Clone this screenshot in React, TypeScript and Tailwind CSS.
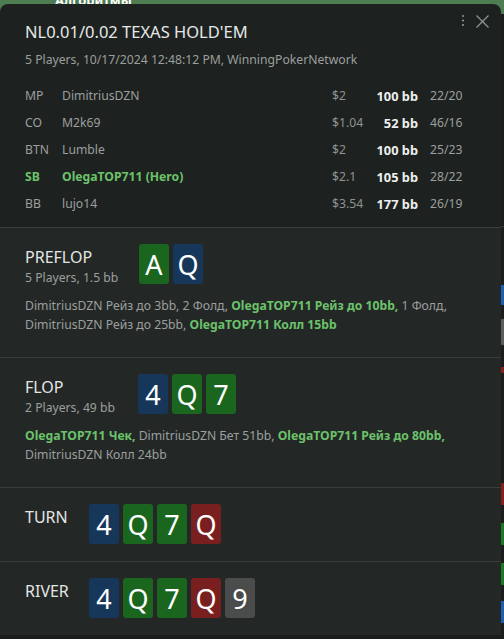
import React from 'react';

type Suit = 'c' | 'd' | 'h' | 's';

const suitBg: Record<Suit, string> = {
  c: 'bg-[#1b661f]',
  d: 'bg-[#16375a]',
  h: 'bg-[#7a1f1f]',
  s: 'bg-[#4a4b4b]',
};

const players = [
  { pos: 'MP', name: 'DimitriusDZN', stack: '$2', bb: '100 bb', stats: '22/20' },
  { pos: 'CO', name: 'M2k69', stack: '$1.04', bb: '52 bb', stats: '46/16' },
  { pos: 'BTN', name: 'Lumble', stack: '$2', bb: '100 bb', stats: '25/23' },
  { pos: 'SB', name: 'OlegaTOP711 (Hero)', stack: '$2.1', bb: '105 bb', stats: '28/22', hero: true },
  { pos: 'BB', name: 'lujo14', stack: '$3.54', bb: '177 bb', stats: '26/19' },
];

const Card = ({ rank, suit }: { rank: string; suit: Suit }) => (
  <div
    className={`w-[30px] h-[40px] rounded-[3px] flex items-center justify-center text-[27px] leading-none text-white ${suitBg[suit]}`}
  >
    {rank}
  </div>
);

const Hero = ({ children }: { children: React.ReactNode }) => (
  <span className="font-bold text-[#6cc26b]">{children}</span>
);

const Street = ({
  label,
  sub,
  cards,
  labelWidth,
  children,
}: {
  label: string;
  sub?: string;
  cards: [string, Suit][];
  labelWidth: string;
  children?: React.ReactNode;
}) => (
  <section className="border-t border-[#393e3b] bg-[#232826] pl-[25px] pr-[20px] pt-[16px] pb-[17px]">
    <div className="flex items-start">
      <div className={`${labelWidth} shrink-0 pt-[1px]`}>
        <div className="text-[16px] leading-[24px] text-[#e4e6e5]">{label}</div>
        {sub && <div className="text-[12.2px] leading-[17px] text-[#9c9f9e]">{sub}</div>}
      </div>
      <div className="flex gap-[4px]">
        {cards.map(([r, s], i) => (
          <Card key={i} rank={r} suit={s} />
        ))}
      </div>
    </div>
    {children && (
      <p className="mt-[10px] mb-[6px] text-[12.2px] leading-[19px] text-[#9c9f9e]">{children}</p>
    )}
  </section>
);

const App = () => {
  return (
    <div
      className="relative w-[504px] h-[639px] overflow-hidden bg-[#1a1d1c]"
      style={{ fontFamily: '"Segoe UI", "Noto Sans", "Open Sans", sans-serif' }}
    >
      {/* app behind the popup */}
      <div className="absolute top-0 left-0 right-0 h-[14px] bg-[#4e7d51] overflow-hidden">
        <div className="pl-[55px] -mt-[9px] text-[13px] font-bold text-white">Алгоритмы</div>
      </div>
      <div className="absolute right-0 top-0 w-[3px] h-full flex flex-col">
        <div className="h-[226px]" />
        <div className="h-[1px] bg-[#3a3f3c]" />
        <div className="h-[58px]" />
        <div className="h-[20px] bg-[#1d5fb0]" />
        <div className="h-[14px]" />
        <div className="h-[26px] bg-[#5a5c5b]" />
        <div className="h-[22px]" />
        <div className="h-[6px] bg-[#8a1c1c]" />
        <div className="h-[110px]" />
        <div className="h-[22px] bg-[#8a1c1c]" />
        <div className="h-[18px]" />
        <div className="h-[22px] bg-[#1b7a22]" />
        <div className="h-[18px]" />
        <div className="h-[22px] bg-[#1b7a22]" />
        <div className="h-[16px]" />
        <div className="h-[22px] bg-[#1d5fb0]" />
      </div>

      <div className="relative mt-[4px] w-[501px] rounded-t-[8px] overflow-hidden">
        {/* header */}
        <header className="relative bg-[#1d2220] pl-[25px] pr-[36px] pt-[16px] pb-[9px]">
          <div className="absolute top-[8px] right-[11px] flex items-center gap-[10px] text-[#8f9391]">
            <svg width="4" height="16" viewBox="0 0 4 16" fill="currentColor">
              <circle cx="2" cy="4" r="1.1" />
              <circle cx="2" cy="8.5" r="1.1" />
              <circle cx="2" cy="13" r="1.1" />
            </svg>
            <svg width="15" height="15" viewBox="0 0 15 15" stroke="currentColor" strokeWidth="1.3" fill="none">
              <path d="M1.5 2.5 L13.5 14.5 M13.5 2.5 L1.5 14.5" />
            </svg>
          </div>
          <h1 className="text-[16.5px] leading-[24px] text-[#e6e8e7]">NL0.01/0.02 TEXAS HOLD'EM</h1>
          <div className="mt-[7px] text-[12.2px] leading-[18px] text-[#9c9f9e]">
            5 Players, 10/17/2024 12:48:12 PM, WinningPokerNetwork
          </div>
          <div className="mt-[14px] text-[12.2px]">
            {players.map((p) => (
              <div
                key={p.pos}
                className={`flex items-center h-[27px] ${p.hero ? 'text-[#6cc26b] font-bold' : 'text-[#9c9f9e]'}`}
              >
                <div className="w-[37px]">{p.pos}</div>
                <div className="flex-1">{p.name}</div>
                <div className="w-[38px] font-normal text-[#8e9290]">{p.stack}</div>
                <div className="w-[48px] text-right text-[12.8px] font-bold text-[#eef0ef]">{p.bb}</div>
                <div className="w-[35px] ml-[12px] font-normal text-[#9c9f9e]">{p.stats}</div>
              </div>
            ))}
          </div>
        </header>

        <Street
          label="PREFLOP"
          sub="5 Players, 1.5 bb"
          labelWidth="w-[114px]"
          cards={[
            ['A', 'c'],
            ['Q', 'd'],
          ]}
        >
          DimitriusDZN Рейз до 3bb, 2 Фолд, <Hero>OlegaTOP711 Рейз до 10bb,</Hero> 1 Фолд,
          <br />
          DimitriusDZN Рейз до 25bb, <Hero>OlegaTOP711 Колл 15bb</Hero>
        </Street>

        <Street
          label="FLOP"
          sub="2 Players, 49 bb"
          labelWidth="w-[113px]"
          cards={[
            ['4', 'd'],
            ['Q', 'c'],
            ['7', 'c'],
          ]}
        >
          <Hero>OlegaTOP711 Чек,</Hero> DimitriusDZN Бет 51bb, <Hero>OlegaTOP711 Рейз до 80bb,</Hero>
          <br />
          DimitriusDZN Колл 24bb
        </Street>

        <Street
          label="TURN"
          labelWidth="w-[64px]"
          cards={[
            ['4', 'd'],
            ['Q', 'c'],
            ['7', 'c'],
            ['Q', 'h'],
          ]}
        />

        <Street
          label="RIVER"
          labelWidth="w-[64px]"
          cards={[
            ['4', 'd'],
            ['Q', 'c'],
            ['7', 'c'],
            ['Q', 'h'],
            ['9', 's'],
          ]}
        />
      </div>
    </div>
  );
};

export default App;
